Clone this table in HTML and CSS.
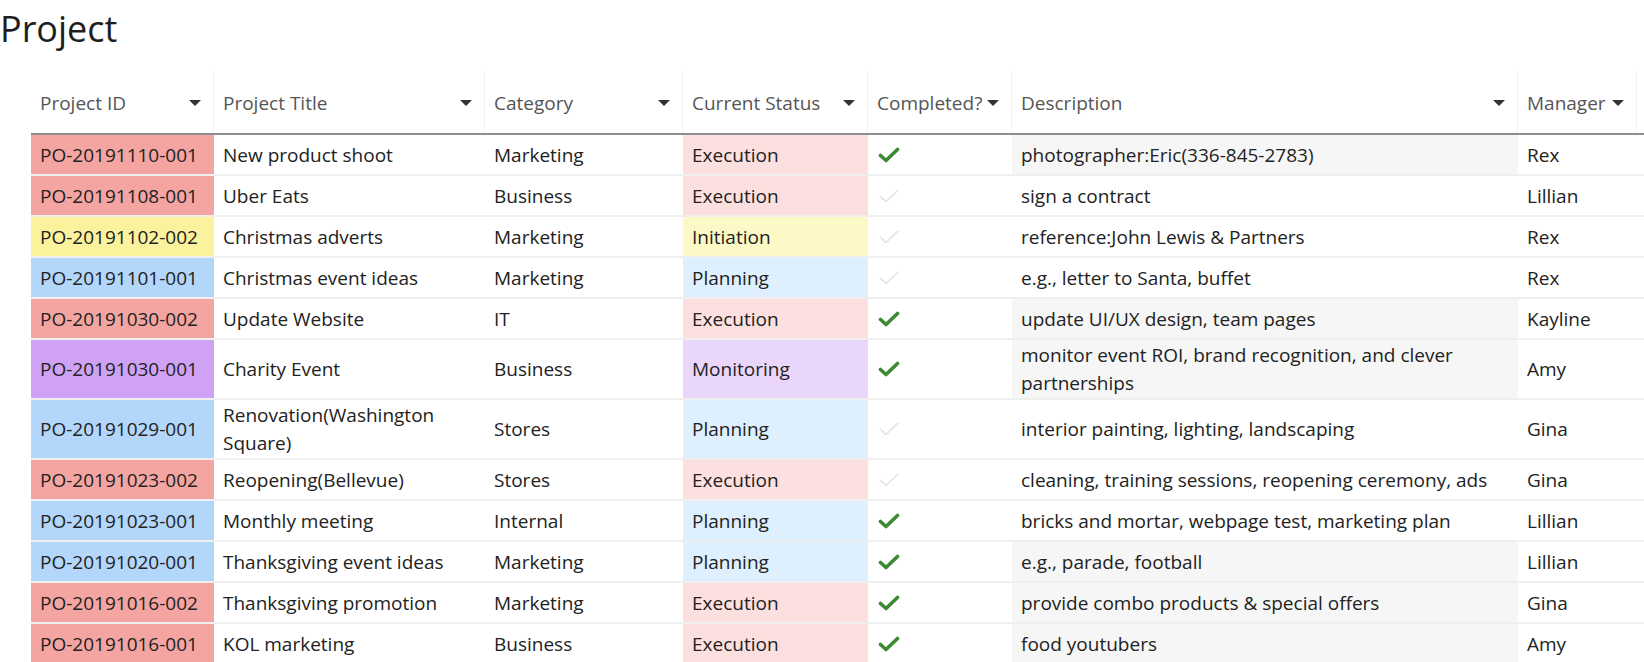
FILE: index.html
```html
<!DOCTYPE html>
<html lang="en">
<head>
<meta charset="utf-8">
<title>Project</title>
<link rel="stylesheet" href="styles.css">
</head>
<body>
<h1 class="page-title">Project</h1>
<div class="table">
  <div class="row head">
    <div class="hcell"><span>Project ID</span><i class="caret"></i></div>
    <div class="hcell"><span>Project Title</span><i class="caret"></i></div>
    <div class="hcell"><span>Category</span><i class="caret"></i></div>
    <div class="hcell"><span>Current Status</span><i class="caret"></i></div>
    <div class="hcell"><span>Completed?</span><i class="caret"></i></div>
    <div class="hcell"><span>Description</span><i class="caret"></i></div>
    <div class="hcell"><span>Manager</span><i class="caret"></i></div>
    <div class="hcell"></div>
  </div>

  <div class="row">
    <div class="cell id red">PO-20191110-001</div>
    <div class="cell">New product shoot</div>
    <div class="cell">Marketing</div>
    <div class="cell st-red">Execution</div>
    <div class="cell chk"><svg class="check on" viewBox="0 0 22 16"><polyline points="2.5,8.5 8,13.5 19.5,2.5"/></svg></div>
    <div class="cell desc shade">photographer:Eric(336-845-2783)</div>
    <div class="cell">Rex</div>
    <div class="cell"></div>
  </div>

  <div class="row">
    <div class="cell id red">PO-20191108-001</div>
    <div class="cell">Uber Eats</div>
    <div class="cell">Business</div>
    <div class="cell st-red">Execution</div>
    <div class="cell chk"><svg class="check off" viewBox="0 0 22 16"><polyline points="2.5,8.5 8,13.5 19.5,2.5"/></svg></div>
    <div class="cell desc">sign a contract</div>
    <div class="cell">Lillian</div>
    <div class="cell"></div>
  </div>

  <div class="row">
    <div class="cell id yellow">PO-20191102-002</div>
    <div class="cell">Christmas adverts</div>
    <div class="cell">Marketing</div>
    <div class="cell st-yellow">Initiation</div>
    <div class="cell chk"><svg class="check off" viewBox="0 0 22 16"><polyline points="2.5,8.5 8,13.5 19.5,2.5"/></svg></div>
    <div class="cell desc">reference:John Lewis &amp; Partners</div>
    <div class="cell">Rex</div>
    <div class="cell"></div>
  </div>

  <div class="row">
    <div class="cell id blue">PO-20191101-001</div>
    <div class="cell">Christmas event ideas</div>
    <div class="cell">Marketing</div>
    <div class="cell st-blue">Planning</div>
    <div class="cell chk"><svg class="check off" viewBox="0 0 22 16"><polyline points="2.5,8.5 8,13.5 19.5,2.5"/></svg></div>
    <div class="cell desc">e.g., letter to Santa, buffet</div>
    <div class="cell">Rex</div>
    <div class="cell"></div>
  </div>

  <div class="row">
    <div class="cell id red">PO-20191030-002</div>
    <div class="cell">Update Website</div>
    <div class="cell">IT</div>
    <div class="cell st-red">Execution</div>
    <div class="cell chk"><svg class="check on" viewBox="0 0 22 16"><polyline points="2.5,8.5 8,13.5 19.5,2.5"/></svg></div>
    <div class="cell desc shade">update UI/UX design, team pages</div>
    <div class="cell">Kayline</div>
    <div class="cell"></div>
  </div>

  <div class="row">
    <div class="cell id purple">PO-20191030-001</div>
    <div class="cell">Charity Event</div>
    <div class="cell">Business</div>
    <div class="cell st-purple">Monitoring</div>
    <div class="cell chk"><svg class="check on" viewBox="0 0 22 16"><polyline points="2.5,8.5 8,13.5 19.5,2.5"/></svg></div>
    <div class="cell desc shade">monitor event ROI, brand recognition, and clever partnerships</div>
    <div class="cell">Amy</div>
    <div class="cell"></div>
  </div>

  <div class="row">
    <div class="cell id blue">PO-20191029-001</div>
    <div class="cell">Renovation(Washington Square)</div>
    <div class="cell">Stores</div>
    <div class="cell st-blue">Planning</div>
    <div class="cell chk"><svg class="check off" viewBox="0 0 22 16"><polyline points="2.5,8.5 8,13.5 19.5,2.5"/></svg></div>
    <div class="cell desc">interior painting, lighting, landscaping</div>
    <div class="cell">Gina</div>
    <div class="cell"></div>
  </div>

  <div class="row">
    <div class="cell id red">PO-20191023-002</div>
    <div class="cell">Reopening(Bellevue)</div>
    <div class="cell">Stores</div>
    <div class="cell st-red">Execution</div>
    <div class="cell chk"><svg class="check off" viewBox="0 0 22 16"><polyline points="2.5,8.5 8,13.5 19.5,2.5"/></svg></div>
    <div class="cell desc">cleaning, training sessions, reopening ceremony, ads</div>
    <div class="cell">Gina</div>
    <div class="cell"></div>
  </div>

  <div class="row">
    <div class="cell id blue">PO-20191023-001</div>
    <div class="cell">Monthly meeting</div>
    <div class="cell">Internal</div>
    <div class="cell st-blue">Planning</div>
    <div class="cell chk"><svg class="check on" viewBox="0 0 22 16"><polyline points="2.5,8.5 8,13.5 19.5,2.5"/></svg></div>
    <div class="cell desc">bricks and mortar, webpage test, marketing plan</div>
    <div class="cell">Lillian</div>
    <div class="cell"></div>
  </div>

  <div class="row">
    <div class="cell id blue">PO-20191020-001</div>
    <div class="cell">Thanksgiving event ideas</div>
    <div class="cell">Marketing</div>
    <div class="cell st-blue">Planning</div>
    <div class="cell chk"><svg class="check on" viewBox="0 0 22 16"><polyline points="2.5,8.5 8,13.5 19.5,2.5"/></svg></div>
    <div class="cell desc shade">e.g., parade, football</div>
    <div class="cell">Lillian</div>
    <div class="cell"></div>
  </div>

  <div class="row">
    <div class="cell id red">PO-20191016-002</div>
    <div class="cell">Thanksgiving promotion</div>
    <div class="cell">Marketing</div>
    <div class="cell st-red">Execution</div>
    <div class="cell chk"><svg class="check on" viewBox="0 0 22 16"><polyline points="2.5,8.5 8,13.5 19.5,2.5"/></svg></div>
    <div class="cell desc shade">provide combo products &amp; special offers</div>
    <div class="cell">Gina</div>
    <div class="cell"></div>
  </div>

  <div class="row">
    <div class="cell id red">PO-20191016-001</div>
    <div class="cell">KOL marketing</div>
    <div class="cell">Business</div>
    <div class="cell st-red">Execution</div>
    <div class="cell chk"><svg class="check on" viewBox="0 0 22 16"><polyline points="2.5,8.5 8,13.5 19.5,2.5"/></svg></div>
    <div class="cell desc shade">food youtubers</div>
    <div class="cell">Amy</div>
    <div class="cell"></div>
  </div>
</div>
</body>
</html>
```

FILE: styles.css
```css
html, body {
  margin: 0;
  padding: 0;
  background: #ffffff;
  overflow: hidden;
}

body {
  font-family: "Open Sans", "Noto Sans", "Liberation Sans", sans-serif;
  color: #222222;
  width: 1644px;
  height: 662px;
}

.page-title {
  margin: 0;
  padding: 5px 0 0 0;
  font-size: 36px;
  font-weight: 400;
  line-height: 47px;
  color: #1e1e1e;
}

.table {
  margin: 18px 0 0 31px;
  width: 1813px;
}

.row {
  display: grid;
  grid-template-columns: 183px 271px 198px 185px 144px 506px 119px 207px;
  border-bottom: 2px solid #efefef;
}

.row.head {
  border-bottom: 2px solid #8e8e8e;
}

.hcell {
  height: 63px;
  box-sizing: border-box;
  padding: 2px 12px 0 9px;
  display: flex;
  align-items: center;
  justify-content: space-between;
  gap: 3px;
  font-size: 19px;
  line-height: 28px;
  color: #555555;
  border-right: 1px solid #f3f3f3;
  white-space: nowrap;
}

.caret {
  flex: none;
  width: 0;
  height: 0;
  border-left: 6px solid transparent;
  border-right: 6px solid transparent;
  border-top: 6px solid #333333;
  margin-top: 1px;
}

.cell {
  min-height: 39px;
  box-sizing: border-box;
  padding: 1px 9px;
  display: flex;
  align-items: center;
  font-size: 19px;
  line-height: 28px;
  color: #222222;
}

.id.red { background: #f4a5a1; }
.id.yellow { background: #fbf29d; }
.id.blue { background: #b3d6fb; }
.id.purple { background: #d0a2f6; }

.st-red { background: #fcdfdf; }
.st-yellow { background: #fdf9c6; }
.st-blue { background: #deeffd; }
.st-purple { background: #ebd6fb; }

.desc.shade { background: #f6f6f6; }

.chk {
  padding-left: 10px;
}

.check {
  width: 22px;
  height: 16px;
  display: block;
  fill: none;
  stroke-linecap: round;
  stroke-linejoin: round;
}

.check.on {
  stroke: #3b8a31;
  stroke-width: 3.6;
}

.check.off {
  stroke: #e2e2e2;
  stroke-width: 1.6;
}
```
